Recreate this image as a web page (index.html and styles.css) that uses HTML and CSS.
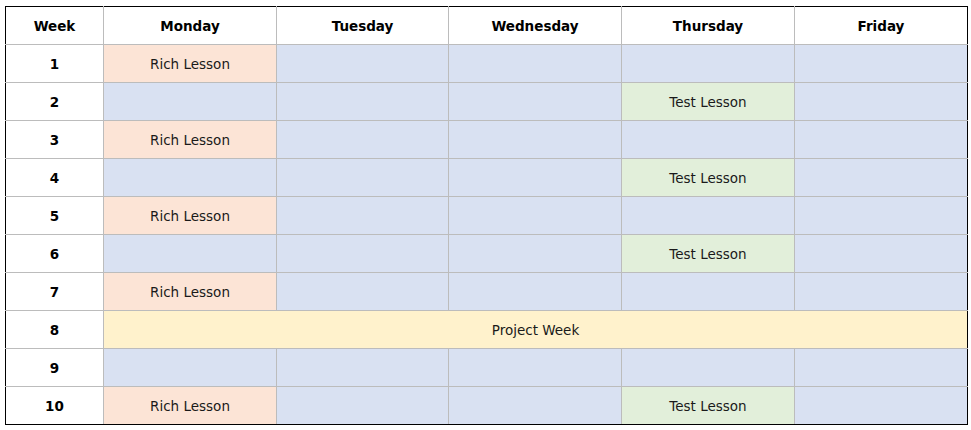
FILE: index.html
```html
<!DOCTYPE html>
<html>
<head>
<meta charset="utf-8">
<link rel="stylesheet" href="styles.css">
</head>
<body>
<table class="schedule">
  <colgroup>
    <col class="c-week"><col class="c-day"><col class="c-day2"><col class="c-day"><col class="c-day"><col class="c-day">
  </colgroup>
  <thead>
    <tr><th>Week</th><th>Monday</th><th>Tuesday</th><th>Wednesday</th><th>Thursday</th><th>Friday</th></tr>
  </thead>
  <tbody>
    <tr><th>1</th><td class="rich">Rich Lesson</td><td></td><td></td><td></td><td></td></tr>
    <tr><th>2</th><td></td><td></td><td></td><td class="test">Test Lesson</td><td></td></tr>
    <tr><th>3</th><td class="rich">Rich Lesson</td><td></td><td></td><td></td><td></td></tr>
    <tr><th>4</th><td></td><td></td><td></td><td class="test">Test Lesson</td><td></td></tr>
    <tr><th>5</th><td class="rich">Rich Lesson</td><td></td><td></td><td></td><td></td></tr>
    <tr><th>6</th><td></td><td></td><td></td><td class="test">Test Lesson</td><td></td></tr>
    <tr><th>7</th><td class="rich">Rich Lesson</td><td></td><td></td><td></td><td></td></tr>
    <tr><th>8</th><td class="project" colspan="5">Project Week</td></tr>
    <tr><th>9</th><td></td><td></td><td></td><td></td><td></td></tr>
    <tr><th>10</th><td class="rich">Rich Lesson</td><td></td><td></td><td class="test">Test Lesson</td><td></td></tr>
  </tbody>
</table>
</body>
</html>
```

FILE: styles.css
```css
html, body {
  margin: 0;
  background: #ffffff;
}
body {
  padding: 6px 0 0 5px;
  font-family: "DejaVu Sans", Verdana, sans-serif;
  font-size: 13.5px;
  color: #000;
}
.schedule {
  border-collapse: collapse;
  table-layout: fixed;
  width: 961px;
  border: 1px solid #000;
}
.c-week { width: 98px; }
.c-day { width: 173px; }
.c-day2 { width: 172px; }
.schedule th,
.schedule td {
  height: 38px;
  padding: 0;
  text-align: center;
  vertical-align: middle;
  border: 1px solid #bcbcbc;
  background: #d9e1f2;
  box-sizing: border-box;
  color: #1a1a1a;
}
.schedule thead th,
.schedule tbody th {
  background: #ffffff;
  font-weight: bold;
  color: #000;
}
.schedule tr > :first-child { border-left: 1px solid #000; }
.schedule tr > :last-child { border-right: 1px solid #000; }
.schedule thead th { border-top: 1px solid #000; }
.schedule tbody tr:last-child > * { border-bottom: 1px solid #000; }
.schedule td.rich { background: #fce4d6; }
.schedule td.test { background: #e2efda; }
.schedule td.project { background: #fff2cc; }
```
